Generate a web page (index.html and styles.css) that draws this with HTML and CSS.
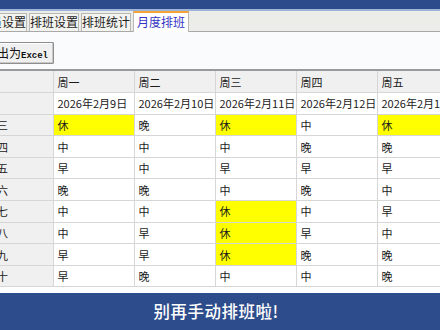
FILE: index.html
```html
<!DOCTYPE html>
<html lang="zh-CN">
<head>
  <meta charset="UTF-8">
  <title>月度排班</title>
  <link rel="stylesheet" href="styles.css">
</head>
<body>
  <div class="window">
    <div class="titlebar"></div>

    <div class="tabs">
      <span class="tab">人员设置</span>
      <span class="tab">排班设置</span>
      <span class="tab">排班统计</span>
      <span class="tab active">月度排班</span>
    </div>

    <div class="toolbar">
      <button class="export-btn">导出为<span class="latin">Excel</span></button>
    </div>

    <div class="grid-wrap">
      <table class="schedule">
        <tr class="head">
          <td class="name"></td>
          <td>周一</td><td>周二</td><td>周三</td><td>周四</td><td>周五</td><td>周六</td><td>周日</td>
        </tr>
        <tr>
          <td class="name"></td>
          <td>2026年2月9日</td><td>2026年2月10日</td><td>2026年2月11日</td><td>2026年2月12日</td><td>2026年2月13日</td><td>2026年2月14日</td><td>2026年2月15日</td>
        </tr>
        <tr>
          <td class="name">张三</td>
          <td class="off">休</td><td>晚</td><td class="off">休</td><td>中</td><td class="off">休</td><td>早</td><td>中</td>
        </tr>
        <tr>
          <td class="name">李四</td>
          <td>中</td><td>中</td><td>中</td><td>晚</td><td>晚</td><td>早</td><td>休</td>
        </tr>
        <tr>
          <td class="name">王五</td>
          <td>早</td><td>中</td><td>早</td><td>早</td><td>早</td><td>晚</td><td>中</td>
        </tr>
        <tr>
          <td class="name">赵六</td>
          <td>晚</td><td>晚</td><td>中</td><td>晚</td><td>中</td><td>中</td><td>早</td>
        </tr>
        <tr>
          <td class="name">孙七</td>
          <td>中</td><td>中</td><td class="off">休</td><td>中</td><td>早</td><td>晚</td><td>晚</td>
        </tr>
        <tr>
          <td class="name">周八</td>
          <td>中</td><td>早</td><td class="off">休</td><td>早</td><td>中</td><td>中</td><td>早</td>
        </tr>
        <tr>
          <td class="name">吴九</td>
          <td>早</td><td>早</td><td class="off">休</td><td>晚</td><td>晚</td><td>早</td><td>中</td>
        </tr>
        <tr>
          <td class="name">郑十</td>
          <td>早</td><td>晚</td><td>中</td><td>中</td><td>晚</td><td>晚</td><td>早</td>
        </tr>
      </table>
    </div>
  </div>

  <div class="caption">别再手动排班啦!</div>
</body>
</html>
```

FILE: styles.css
```css
* {
  box-sizing: border-box;
  font-family: "Noto Sans CJK SC", "Noto Sans", sans-serif;
}
html, body {
  margin: 0;
  height: 330px;
  overflow: hidden;
}
body {
  display: flex;
  flex-direction: column;
  background: #fff;
  color: #1a1a1a;
}

/* the app window is cropped on the left */
.window {
  flex: 1;
  width: 520px;
  margin-left: -28px;
  display: flex;
  flex-direction: column;
  overflow: hidden;
}
.titlebar {
  height: 11px;
  background: #2c4b8b;
  border-bottom: 2px solid #9db3d8;
}

.tabs {
  height: 21px;
  background: #ecece8;
  border-bottom: 1px solid #a9a9a9;
  display: flex;
  align-items: flex-end;
  gap: 2px;
  padding-left: 5px;
}
.tab {
  height: 18px;
  line-height: 16px;
  font-size: 12px;
  padding: 0;
  border: 1px solid #b9b9b4;
  border-bottom: none;
  background: #f3f3f0;
  color: #1e1e1e;
}
.tab.active {
  height: 21px;
  margin-bottom: -1px;
  padding: 0 3px;
  line-height: 18px;
  background: #fff;
  color: #3434c4;
  border-top: 2px solid #f2a33a;
}

.toolbar {
  height: 37px;
  background: #fafbfd;
  padding: 7px 0 0 5px;
}
.export-btn {
  height: 22px;
  padding: 0 5px 0 7px;
  font-size: 12px;
  color: #111;
  background: #f0f0f0;
  border: 1px solid #8e8e8e;
  box-shadow: inset -1px -1px 0 #c8c8c8, inset 1px 1px 0 #fff;
  border-radius: 1px;
}
.export-btn .latin {
  font-family: "Liberation Mono", monospace;
  font-size: 9px;
  font-weight: bold;
}

.grid-wrap {
  flex: 1;
  border-top: 2px solid #9a9a9a;
  overflow: hidden;
}
.schedule {
  border-collapse: collapse;
  table-layout: fixed;
  width: 648px;
}
.schedule td {
  width: 81px;
  height: 21.6px;
  padding: 0 0 0 4px;
  font-size: 11px;
  white-space: nowrap;
  overflow: hidden;
  border: 1px solid #d6d6d6;
  border-top: none;
  background: #fff;
}
.schedule .head td,
.schedule td.name {
  background: #f0f0f0;
}
.schedule td.name {
  padding-left: 14px;
  border-left: none;
}
.schedule td.off {
  background: #ffff00;
}

.caption {
  height: 37px;
  flex-shrink: 0;
  background: #2d4c8c;
  color: #fff;
  font-size: 16.5px;
  font-weight: 500;
  text-align: center;
  line-height: 37px;
  letter-spacing: 0.5px;
  padding-right: 8px;
}
```
